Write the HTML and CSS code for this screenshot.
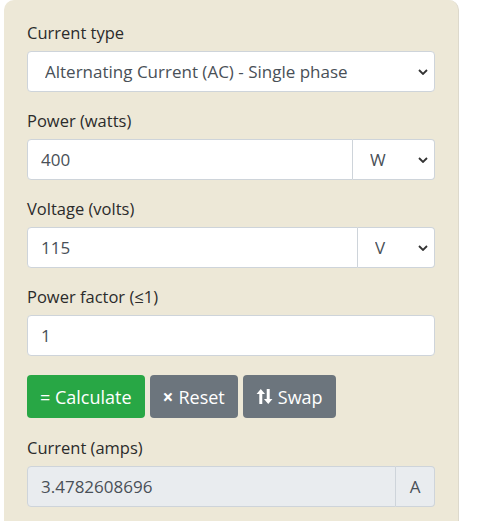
FILE: index.html
```html
<!DOCTYPE html>
<html lang="en">
<head>
    <meta charset="UTF-8">
    <meta name="viewport" content="width=device-width, initial-scale=1.0">
    <title>Watts to amps calculator</title>
    <link rel="stylesheet" href="styles.css">
</head>
<body>
    <div class="calc-panel">
        <div class="form-group">
            <label class="form-label" for="current-type">Current type</label>
            <select class="form-select" id="current-type">
                <option>Direct Current (DC)</option>
                <option selected>Alternating Current (AC) - Single phase</option>
                <option>Alternating Current (AC) - Three phase</option>
            </select>
        </div>
        <div class="form-group">
            <label class="form-label" for="power">Power (watts)</label>
            <div class="input-group">
                <input class="form-input" id="power" type="text" value="400">
                <select class="form-select unit-select unit-w">
                    <option selected>W</option>
                    <option>kW</option>
                </select>
            </div>
        </div>
        <div class="form-group">
            <label class="form-label" for="voltage">Voltage (volts)</label>
            <div class="input-group">
                <input class="form-input" id="voltage" type="text" value="115">
                <select class="form-select unit-select unit-v">
                    <option selected>V</option>
                    <option>kV</option>
                </select>
            </div>
        </div>
        <div class="form-group">
            <label class="form-label" for="pf">Power factor (≤1)</label>
            <input class="form-input" id="pf" type="text" value="1">
        </div>
        <div class="btn-row">
            <button class="btn btn-green" type="button">= Calculate</button>
            <button class="btn btn-gray" type="button"><span class="btn-x">×</span> Reset</button>
            <button class="btn btn-gray" type="button">
                <svg class="swap-icon" width="17" height="17" viewBox="0 0 16 16">
                    <path d="M4.5 1 L8.5 5.6 H5.9 V15 H3.1 V5.6 H0.5 Z" fill="#fff"/>
                    <path d="M11.5 15 L15.5 10.4 H12.9 V1 H10.1 V10.4 H7.5 Z" fill="#fff"/>
                </svg>
                Swap
            </button>
        </div>
        <div class="form-group result-group">
            <label class="form-label" for="amps">Current (amps)</label>
            <div class="input-group">
                <input class="form-input readonly" id="amps" type="text" value="3.4782608696" readonly>
                <span class="addon">A</span>
            </div>
        </div>
    </div>
</body>
</html>
```

FILE: styles.css
```css
body {
    margin: 0;
    background: #fff;
    font-family: "Open Sans", "Noto Sans", Arial, sans-serif;
    font-size: 16.5px;
    color: #212529;
}
.calc-panel {
    width: 408px;
    margin-left: 4px;
    padding: 20px 23px 0 23px;
    background: #ede8d7;
    border-right: 1px solid #ddd9cc;
    border-radius: 10px 10px 0 0;
    min-height: 501px;
}
.form-group {
    margin-bottom: 16px;
}
.form-label {
    display: block;
    line-height: 25px;
    margin-bottom: 6px;
    color: #2b2b2b;
}
.form-select,
.form-input {
    display: block;
    width: 100%;
    box-sizing: border-box;
    height: 41px;
    margin: 0;
    font-family: inherit;
    font-size: 17px;
    color: #495057;
    background-color: #fff;
    border: 1px solid #ced4da;
    border-radius: 4px;
    outline: none;
}
.form-input {
    padding: 0 13px;
}
.form-select {
    appearance: none;
    -webkit-appearance: none;
    padding: 0 30px 0 17px;
    background-image: url("data:image/svg+xml,%3Csvg xmlns='http://www.w3.org/2000/svg' width='10' height='6' viewBox='0 0 10 6'%3E%3Cpath d='M1 1l4 4 4-4' fill='none' stroke='%23333' stroke-width='1.8'/%3E%3C/svg%3E");
    background-repeat: no-repeat;
    background-position: right 6px center;
}
.input-group {
    display: flex;
}
.input-group .form-input {
    flex: 1;
    border-radius: 4px 0 0 4px;
}
.unit-select {
    flex: none;
    border-left: none;
    border-radius: 0 4px 4px 0;
    padding-left: 17px;
}
.unit-w {
    width: 82px;
}
.unit-v {
    width: 77px;
}
.btn-row {
    display: flex;
    gap: 5px;
    margin-top: 19px;
    margin-bottom: 17px;
}
.btn {
    display: flex;
    align-items: center;
    gap: 5px;
    height: 43px;
    padding: 0 13px;
    border: none;
    border-radius: 4px;
    font-family: inherit;
    font-size: 18px;
    color: #fff;
}
.btn-green {
    background: #28a745;
}
.btn-gray {
    background: #6c757d;
}
.btn-x {
    font-weight: bold;
    font-size: 19px;
}
.swap-icon {
    display: block;
}
.readonly {
    background-color: #e9ecef;
}
.addon {
    display: flex;
    align-items: center;
    justify-content: center;
    width: 39px;
    height: 41px;
    box-sizing: border-box;
    background: #e9ecef;
    border: 1px solid #ced4da;
    border-left: none;
    border-radius: 0 4px 4px 0;
    color: #495057;
    font-size: 17px;
}
```
